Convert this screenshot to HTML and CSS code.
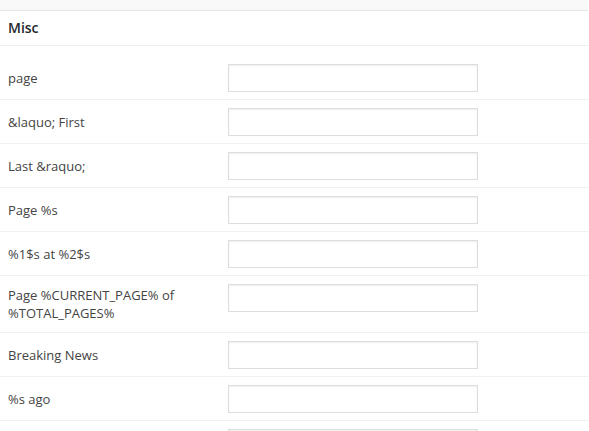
FILE: index.html
```html
<!DOCTYPE html>
<html>
<head>
<meta charset="utf-8">
<link rel="stylesheet" href="styles.css">
</head>
<body>
<div class="topband"></div>
<div class="panel">
  <h2 class="panel-title">Misc</h2>
  <table class="form-table">
    <colgroup><col class="col-label"><col></colgroup>
    <tr><td class="label">page</td><td class="field"><input type="text"></td></tr>
    <tr><td class="label">&amp;laquo; First</td><td class="field"><input type="text"></td></tr>
    <tr><td class="label">Last &amp;raquo;</td><td class="field"><input type="text"></td></tr>
    <tr><td class="label">Page %s</td><td class="field"><input type="text"></td></tr>
    <tr><td class="label">%1$s at %2$s</td><td class="field"><input type="text"></td></tr>
    <tr><td class="label">Page %CURRENT_PAGE% of %TOTAL_PAGES%</td><td class="field"><input type="text"></td></tr>
    <tr><td class="label">Breaking News</td><td class="field"><input type="text"></td></tr>
    <tr><td class="label">%s ago</td><td class="field"><input type="text"></td></tr>
    <tr><td class="label">&nbsp;</td><td class="field"><input type="text"></td></tr>
  </table>
</div>
</body>
</html>
```
FILE: styles.css
```css
html, body {
  margin: 0;
  padding: 0;
  background: #fff;
  font-family: "Open Sans", "Liberation Sans", sans-serif;
  color: #444;
  overflow: hidden;
}
.topband {
  height: 10px;
  width: 588px;
  background: #f9f9f9;
  border-bottom: 1px solid #e5e5e5;
}
.panel {
  background: #fff;
}
.panel-title {
  margin: 0;
  height: 34px;
  line-height: 34px;
  padding: 0 8px;
  font-size: 14px;
  font-weight: 600;
  color: #23282d;
  border-bottom: 1px solid #eee;
}
.form-table {
  margin-top: 10px;
  width: 100%;
  border-collapse: collapse;
  table-layout: fixed;
}
.col-label {
  width: 228px;
}
.form-table tr {
  border-bottom: 1px solid #f1f1f1;
}
.label {
  padding: 10px 10px 10px 8px;
  vertical-align: middle;
  font-size: 13px;
  line-height: 18px;
  color: #444;
}
.field {
  padding: 8px 0 7px 0;
  vertical-align: top;
}
.field input {
  display: block;
  box-sizing: border-box;
  width: 250px;
  height: 28px;
  margin: 0;
  padding: 3px 5px;
  border: 1px solid #ddd;
  box-shadow: inset 0 1px 2px rgba(0,0,0,.07);
  background: #fff;
  font-family: inherit;
  font-size: 14px;
  outline: none;
}
```
